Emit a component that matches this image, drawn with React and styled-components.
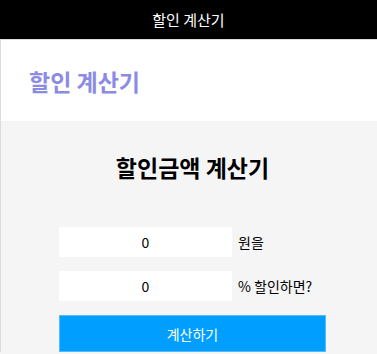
import React, { useState } from 'react'
import styled, { createGlobalStyle } from 'styled-components'

const Global = createGlobalStyle`
  body {
    margin: 0;
    font-family: "Noto Sans CJK KR", "Noto Sans", sans-serif;
    background: #f5f5f5;
  }
`

const TopBar = styled.header`
  height: 39px;
  background: #000;
  color: #fff;
  font-size: 15px;
  display: flex;
  align-items: center;
  justify-content: center;
  border-bottom: 1px solid #dcdcdc;
`

const Page = styled.div`
  border-left: 1px solid #dcdcdc;
`

const TitleBar = styled.div`
  height: 81px;
  background: #fff;
  display: flex;
  align-items: center;
  padding-left: 28px;
`

const PageTitle = styled.h1`
  margin: 0;
  font-size: 23px;
  font-weight: bold;
  color: #8b8be4;
`

const Body = styled.main`
  background: #f5f5f5;
  padding: 31px 0 0 58px;
`

const Form = styled.div`
  width: 267px;
  display: flex;
  flex-direction: column;
`

const Heading = styled.h2`
  margin: 0 0 45px;
  font-size: 23px;
  line-height: 30px;
  font-weight: bold;
  color: #000;
  text-align: center;
`

const Row = styled.div`
  display: flex;
  align-items: center;
  gap: 6px;
  margin-bottom: 14px;
`

const Input = styled.input`
  width: 173px;
  height: 30px;
  box-sizing: border-box;
  border: none;
  background: #fff;
  text-align: center;
  font-family: "Noto Sans CJK KR", "Noto Sans", sans-serif;
  font-size: 14px;
  color: #000;
  outline: none;
`

const Label = styled.span`
  font-size: 14px;
  white-space: nowrap;
  color: #000;
`

const Button = styled.button`
  height: 37px;
  width: 267px;
  background: #009fff;
  border: 1px solid #52bbff;
  color: #fff;
  font-family: "Noto Sans CJK KR", "Noto Sans", sans-serif;
  font-size: 14px;
  cursor: pointer;
`

export default function App() {
  const [price, setPrice] = useState('0')
  const [rate, setRate] = useState('0')

  return (
    <>
      <Global />
      <TopBar>할인 계산기</TopBar>
      <Page>
        <TitleBar>
          <PageTitle>할인 계산기</PageTitle>
        </TitleBar>
        <Body>
          <Form>
            <Heading>할인금액 계산기</Heading>
            <Row>
              <Input value={price} onChange={(e) => setPrice(e.target.value)} />
              <Label>원을</Label>
            </Row>
            <Row>
              <Input value={rate} onChange={(e) => setRate(e.target.value)} />
              <Label>% 할인하면?</Label>
            </Row>
            <Button>계산하기</Button>
          </Form>
        </Body>
      </Page>
    </>
  )
}
